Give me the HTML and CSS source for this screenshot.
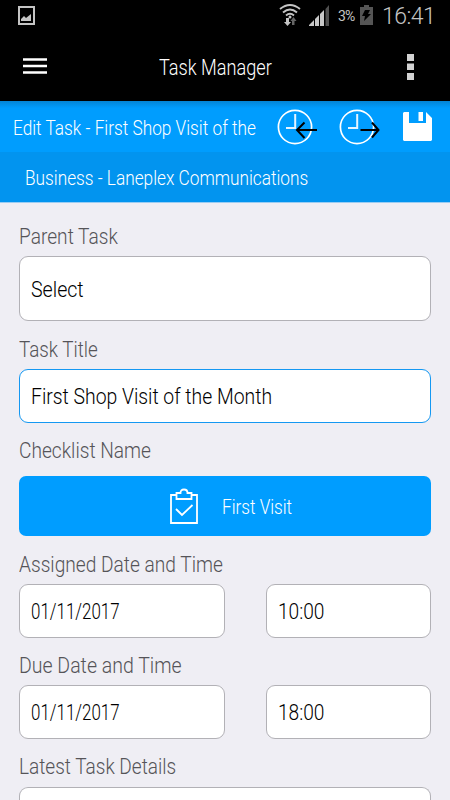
FILE: index.html
```html
<!DOCTYPE html>
<html lang="en">
<head>
<meta charset="utf-8">
<title>Task Manager</title>
<link rel="stylesheet" href="styles.css">
</head>
<body>
<div class="status">
  <svg class="status-photo" width="17" height="19" viewBox="0 0 17 19"><rect x="1" y="1" width="15" height="17" fill="none" stroke="#c4c4c4" stroke-width="2"/><path d="M3 15v-2l3-3 2 2 5-4v7z" fill="#c4c4c4"/></svg>
  <svg class="status-wifi" width="22" height="24" viewBox="0 0 22 24" fill="none" stroke="#c4c4c4" stroke-width="1.9"><path d="M1 6Q11-2 21 6M4 9.500Q11 3.500 18 9.500M7 12.500Q11 9 15 12.500"/><circle cx="11" cy="14" r="1.500" fill="#c4c4c4" stroke="none"/><path d="M7 15h3v4h2l-3.500 4L5 19h2z" fill="#c4c4c4" stroke="none"/><path d="M15.500 22h-2.500v-4h-1.500l3-4 3 4h-2z" fill="#666" stroke="none"/></svg>
  <svg class="status-signal" width="21" height="21" viewBox="0 0 21 21"><path d="M0 21v-1l5-5v6zM6 21v-7l4-4v11zM11 21V9l4-4v16z" fill="#c8c8c8"/><path d="M16.500 21V4L20 0v21z" fill="#505050"/></svg>
  <span class="status-percent">3%</span>
  <svg class="status-battery" width="13" height="20" viewBox="0 0 13 20"><path d="M0 2h4V0h5v2h4v18H0z" fill="#555"/><path d="M5 5h5L8 9h3L4 16l1-5H2z" fill="#000"/></svg>
  <span class="status-time">16:41</span>
</div>
<header class="bar">
  <svg class="menu" width="24" height="17" viewBox="0 0 24 17"><path d="M0 1.500h24M0 8h24M0 14.500h24" stroke="#fff" stroke-width="2.400"/></svg>
  <h1 class="bar-title"><span class="t t-app">Task Manager</span></h1>
  <svg class="more" width="7" height="26" viewBox="0 0 7 26" fill="#d2d2d2"><path d="M0 0h7v7H0zM0 9.500h7v6.500H0zM0 19h7v7H0z"/></svg>
</header>
<section class="toolbar">
  <span class="toolbar-title"><span class="t t-edit">Edit Task - First Shop Visit of the</span></span>
  <svg class="clock-in" width="42" height="36" viewBox="0 0 42 36" fill="none"><circle cx="18" cy="18" r="16.600" stroke="#fff" stroke-width="1.700"/><path d="M18.200 5v14H9" stroke="#e5f4ff" stroke-width="2"/><path d="M40 21H20M27.500 13.500L20 21l7.500 8" stroke="#000" stroke-width="2"/></svg>
  <svg class="clock-out" width="42" height="36" viewBox="0 0 42 36" fill="none"><circle cx="18" cy="18" r="16.600" stroke="#fff" stroke-width="1.700"/><path d="M18.200 5v14H9" stroke="#e5f4ff" stroke-width="2"/><path d="M21.500 21H39.500M33 13.500L39.500 21 33 28.500" stroke="#000" stroke-width="2"/></svg>
  <svg class="save" width="29" height="29" viewBox="0 0 29 29"><path d="M1 0h5v11h17V0l6 6v22l-1 1H1l-1-1V1z" fill="#fff"/><path d="M15.500 0h4.500v9h-4.500z" fill="#fff"/></svg>
</section>
<section class="business"><span class="t t-business">Business - Laneplex Communications</span></section>
<main class="form">
  <div class="field">
    <div class="label"><span class="t t-parent">Parent Task</span></div>
    <div class="input input-tall"><span class="t t-select">Select</span></div>
  </div>
  <div class="field">
    <div class="label"><span class="t t-title">Task Title</span></div>
    <div class="input input-active"><span class="t t-value">First Shop Visit of the Month</span></div>
  </div>
  <div class="field">
    <div class="label label-check"><span class="t t-check">Checklist Name</span></div>
    <div class="button">
      <svg width="30" height="38" viewBox="0 0 30 38" fill="none" stroke="#fff" stroke-width="1.800"><path d="M7 8H2v28h26V8h-5"/><path d="M7.500 12V6h4q0-3.500 3.500-3.500T18.500 6h4v6z"/><path d="M7 22l6 6L23.500 18"/></svg>
      <span class="t t-visit">First Visit</span>
    </div>
  </div>
  <div class="field">
    <div class="label"><span class="t t-assigned">Assigned Date and Time</span></div>
    <div class="pair">
      <div class="input"><span class="t t-date">01/11/2017</span></div>
      <div class="input"><span class="t t-time">10:00</span></div>
    </div>
  </div>
  <div class="field">
    <div class="label label-due"><span class="t t-due">Due Date and Time</span></div>
    <div class="pair">
      <div class="input"><span class="t t-date">01/11/2017</span></div>
      <div class="input"><span class="t t-time">18:00</span></div>
    </div>
  </div>
  <div class="field">
    <div class="label label-latest"><span class="t t-latest">Latest Task Details</span></div>
    <div class="input input-open"></div>
  </div>
</main>
</body>
</html>
```
FILE: styles.css
```css
* { box-sizing: border-box; }
body {
  margin: 0;
  width: 450px;
  height: 800px;
  overflow: hidden;
  display: flex;
  flex-direction: column;
  background: #efeef4;
  font-family: Roboto, "Open Sans", sans-serif;
  font-weight: 300;
}
svg { display: block; flex: none; }
.t {
  display: inline-block;
  white-space: nowrap;
  transform-origin: left center;
}
.status {
  flex: none;
  height: 33px;
  background: #000;
  color: #c4c4c4;
  display: flex;
  align-items: flex-start;
  padding-left: 18px;
}
.status-photo { margin-top: 6px; }
.status-wifi { margin: 3px 0 0 244px; }
.status-signal { margin: 5px 0 0 8px; }
.status-percent { width: 23px; margin: 7px 0 0 8px; font-size: 14px; line-height: 19px; font-weight: 400; letter-spacing: -.8px; }
.status-battery { margin: 5px 0 0 -1px; }
.status-time { margin: 3px 0 0 9px; font-size: 23px; line-height: 28px; font-weight: 300; letter-spacing: -.5px; }
.bar {
  flex: none;
  height: 68px;
  background: #000;
  display: flex;
  align-items: center;
  padding: 0 36px 0 23px;
}
.menu { margin-top: -2px; }
.bar-title { margin: 2px 0 0 112px; width: 248px; font-size: 22px; line-height: 28px; font-weight: 300; color: #fff; }
.toolbar {
  flex: none;
  height: 51px;
  display: flex;
  align-items: center;
  padding-left: 13px;
  background: linear-gradient(#0384d5, #009dfe 7px);
  color: #fff;
}
.toolbar-title { width: 264px; font-size: 20px; line-height: 28px; margin-top: 3px; }
.clock-out { margin-left: 20px; }
.save { margin-left: 22px; }
.business {
  flex: none;
  height: 51px;
  padding: 12px 25px;
  background: #0294ef;
  border-bottom: 1px solid #9bcdf3;
  color: #fff;
  font-size: 20px;
  line-height: 28px;
}
.form {
  flex: 1;
  min-height: 0;
  padding: 0 19px;
}
.label {
  height: 48px;
  padding-top: 15px;
  color: #555458;
  font-size: 22px;
  line-height: 28px;
}
.field:first-child .label { height: 53px; padding-top: 20px; }
.label-check { height: 53px; }
.label-due { height: 47px; }
.label-check, .label-due, .label-latest { padding-top: 14px; }
.input {
  height: 54px;
  display: flex;
  align-items: center;
  padding: 0 11px;
  background: #fff;
  border: 1px solid #b2b1b6;
  border-radius: 9px;
  color: #000;
  font-size: 22px;
}
.input-tall { height: 65px; padding-top: 2px; }
.input-active { border-color: #1498f2; }
.input-open { height: 13px; border-bottom: 0; border-radius: 9px 9px 0 0; }
.button {
  height: 60px;
  display: flex;
  align-items: center;
  padding-left: 150px;
  gap: 23px;
  border-radius: 7px;
  background: #009dff;
  color: #fff;
  font-size: 20px;
}
.pair { display: grid; grid-template-columns: 206px 165px; gap: 41px; }
.t-app { transform: scaleX(.825); }
.t-edit, .t-business { transform: scaleX(.862); }
.t-visit { transform: scaleX(.857); padding-top: 2px; }
.t-title { transform: scaleX(.855); }
.t-parent, .t-check, .t-assigned { transform: scaleX(.87); }
.t-due { transform: scaleX(.887); }
.t-latest { transform: scaleX(.865); }
.t-select { transform: scaleX(.89); }
.t-value { transform: scaleX(.88); }
.t-date { transform: scaleX(.77); }
.t-time { transform: scaleX(.87); }
```
